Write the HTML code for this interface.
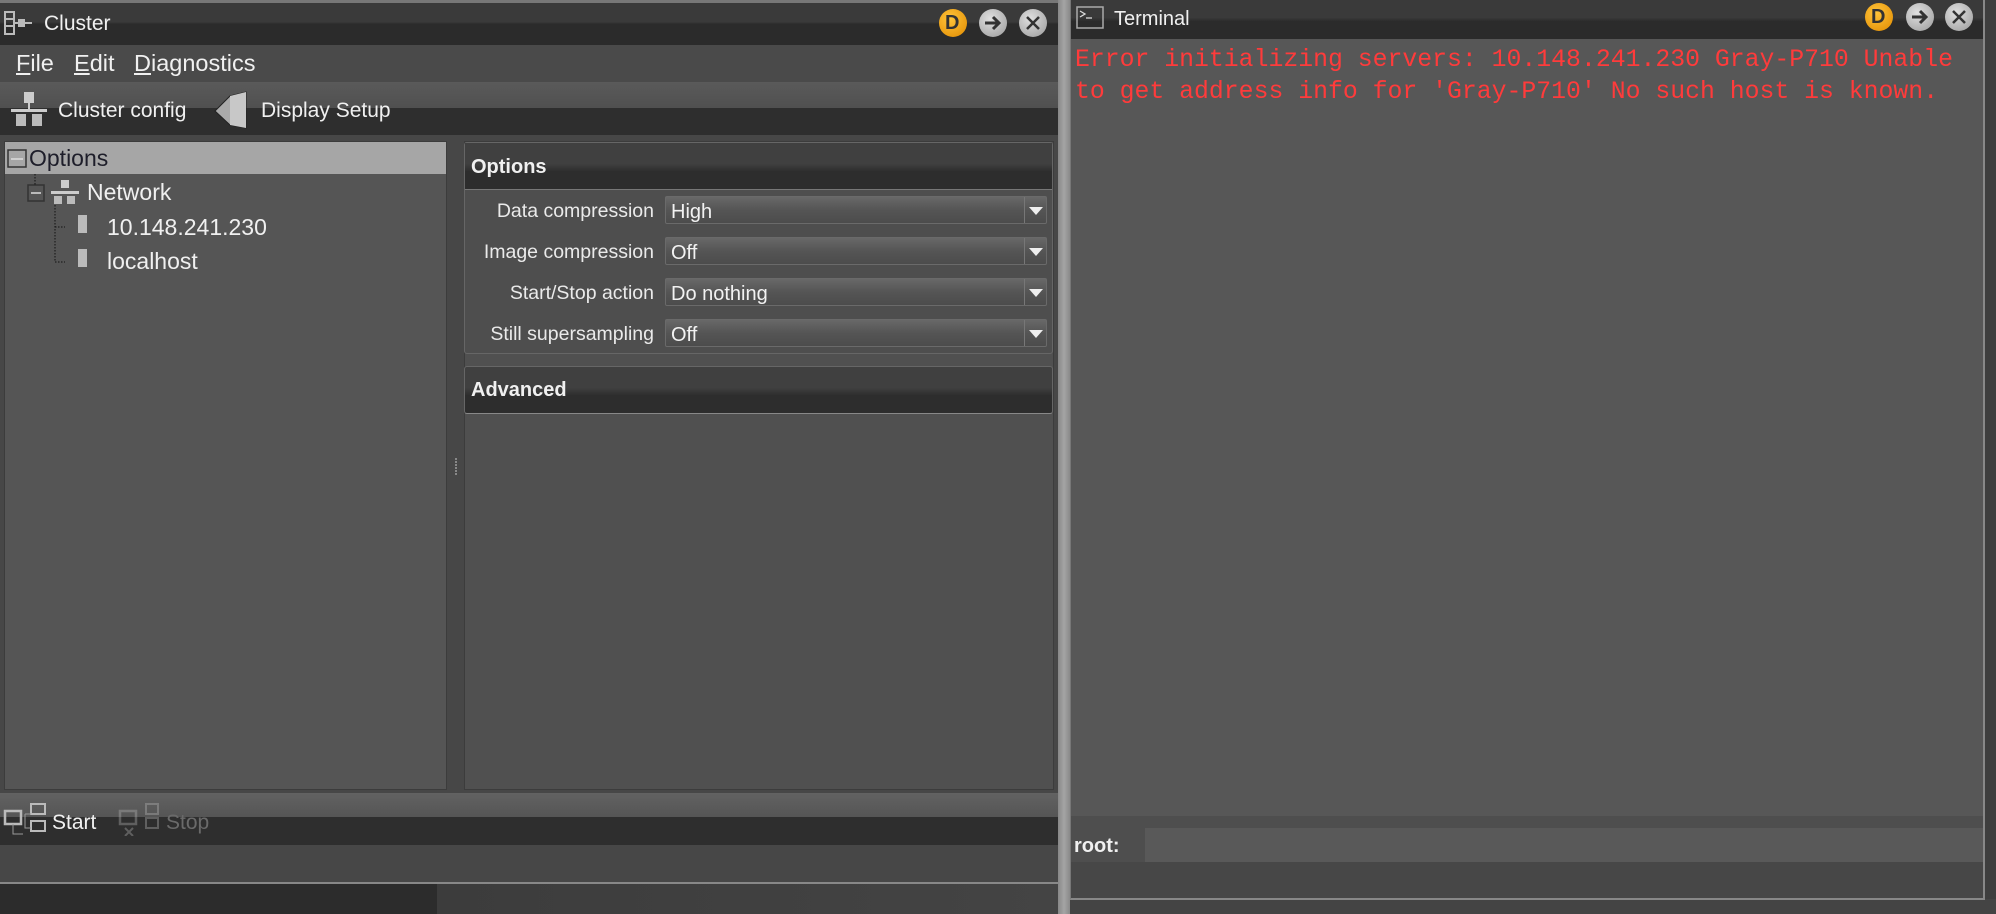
<!DOCTYPE html>
<html><head><meta charset="utf-8"><style>
*{margin:0;padding:0;box-sizing:border-box}
body{width:1996px;height:914px;background:#2c2c2c;position:relative;overflow:hidden;font-family:"Liberation Sans",sans-serif;color:#f0f0f0}
.a{position:absolute}
.t{position:absolute;white-space:nowrap;line-height:1}
.btn{position:absolute;width:28px;height:28px;border-radius:50%;background:radial-gradient(circle at 40% 35%,#e0e0e0,#9a9a9a);}
.combo{position:absolute;left:665px;width:382px;height:28px;border:1px solid #6a6a6a;border-radius:2px;background:linear-gradient(#686868,#555 50%,#4c4c4c);}
.combo span{position:absolute;left:5px;top:4px;font-size:20px;color:#f2f2f2}
.combo i{position:absolute;right:0;top:0;width:22px;height:26px;border-left:1px solid #777}
.combo i:after{content:"";position:absolute;left:4px;top:10px;border-left:7px solid transparent;border-right:7px solid transparent;border-top:8px solid #eee}
.lbl{position:absolute;right:1342px;font-size:19.5px;color:#eaeaea}
</style></head><body>
<div class="a" style="left:437px;top:883px;width:633px;height:31px;background:linear-gradient(90deg,#3c3c3c,#444)"></div>
<div class="a" style="left:1985px;top:0;width:11px;height:914px;background:#3e3e3e"></div>
<div class="a" style="left:1070px;top:899px;width:926px;height:15px;background:#444"></div>
<div class="a" style="left:0;top:0;width:1058px;height:884px;background:#474747;border-bottom:2px solid #888"></div>
<div class="a" style="left:0;top:0;width:1058px;height:3px;background:#777"></div>
<div class="a" style="left:0;top:3px;width:1058px;height:42px;background:linear-gradient(#3a3a3a 0,#3a3a3a 45%,#2b2b2b 50%,#2b2b2b)"></div>
<svg class="a" style="left:4px;top:11px" width="30" height="24"><rect x="1" y="1" width="9" height="22" fill="none" stroke="#bbb" stroke-width="2"/><line x1="1" y1="8" x2="10" y2="8" stroke="#bbb" stroke-width="2"/><line x1="1" y1="15" x2="10" y2="15" stroke="#bbb" stroke-width="2"/><rect x="14" y="8" width="7" height="8" fill="#bbb"/><line x1="10" y1="12" x2="28" y2="12" stroke="#bbb" stroke-width="2"/></svg>
<div class="t" style="left:44px;top:13px;font-size:21px">Cluster</div>
<div class="btn" style="left:939px;top:9px;background:radial-gradient(circle at 40% 35%,#ffc43a,#e08a00)"></div><div class="t" style="left:945px;top:13px;font-size:20px;color:#333;font-weight:bold">D</div>
<div class="btn" style="left:979px;top:9px"></div><svg class="a" style="left:979px;top:9px" width="28" height="28"><path d="M6 14h14M14 8l6 6-6 6" stroke="#333" stroke-width="3" fill="none"/></svg>
<div class="btn" style="left:1019px;top:9px"></div><svg class="a" style="left:1019px;top:9px" width="28" height="28"><path d="M8 8l12 12M20 8L8 20" stroke="#333" stroke-width="2.5"/></svg>
<div class="a" style="left:0;top:45px;width:1058px;height:37px;background:#4a4a4a"></div>
<div class="t" style="left:16px;top:52px;font-size:23.5px"><u>F</u>ile</div>
<div class="t" style="left:74px;top:52px;font-size:23.5px"><u>E</u>dit</div>
<div class="t" style="left:134px;top:52px;font-size:23.5px"><u>D</u>iagnostics</div>
<div class="a" style="left:0;top:82px;width:1058px;height:26px;background:linear-gradient(#5a5a5a,#505050)"></div>
<div class="a" style="left:0;top:108px;width:1058px;height:27px;background:#2e2e2e"></div>
<svg class="a" style="left:10px;top:91px" width="38" height="36"><rect x="14" y="1" width="10" height="11" fill="#ccc"/><rect x="18" y="12" width="2" height="6" fill="#ccc"/><rect x="1" y="18" width="36" height="3" fill="#ccc"/><rect x="6" y="23" width="10" height="12" fill="#bbb"/><rect x="22" y="23" width="10" height="12" fill="#bbb"/></svg>
<div class="t" style="left:58px;top:100px;font-size:21px">Cluster config</div>
<svg class="a" style="left:212px;top:91px" width="44" height="38"><polygon points="34,1 34,37 18,34 3,20 18,5" fill="#aaa" stroke="#222"/><polygon points="18,5 34,1 34,37 18,34" fill="#c8c8c8"/></svg>
<div class="t" style="left:261px;top:100px;font-size:21px">Display Setup</div>
<div class="a" style="left:4px;top:141px;width:443px;height:649px;background:#555;border:1px solid #3c3c3c"></div>
<div class="a" style="left:5px;top:142px;width:441px;height:32px;background:#a6a6a6"></div>
<svg class="a" style="left:5px;top:142px" width="150" height="130"><rect x="3" y="8" width="18" height="17" fill="none" stroke="#333" stroke-width="1.5"/><line x1="6" y1="17" x2="18" y2="17" stroke="#ddd" stroke-width="1.5"/><rect x="23" y="43" width="16" height="16" fill="none" stroke="#333" stroke-width="1.5"/><line x1="26" y1="51" x2="36" y2="51" stroke="#ddd" stroke-width="1.5"/><path d="M30 32v11M50 60v60h10M50 85h10" stroke="#111" stroke-dasharray="1.5 1.5" fill="none"/><rect x="56" y="38" width="8" height="8" fill="#ccc"/><rect x="46" y="49" width="28" height="3" fill="#ccc"/><rect x="49" y="54" width="8" height="8" fill="#bbb"/><rect x="62" y="54" width="8" height="8" fill="#bbb"/><rect x="73" y="73" width="9" height="18" fill="#bbb"/><rect x="73" y="107" width="9" height="18" fill="#bbb"/></svg>
<div class="t" style="left:29px;top:147px;font-size:23px;color:#1e1e2a">Options</div>
<div class="t" style="left:87px;top:181px;font-size:23px">Network</div>
<div class="t" style="left:107px;top:216px;font-size:23px">10.148.241.230</div>
<div class="t" style="left:107px;top:250px;font-size:23px">localhost</div>
<svg class="a" style="left:455px;top:458px" width="4" height="18"><g fill="#888"><rect y="0" width="2" height="2"/><rect y="3" width="2" height="2"/><rect y="6" width="2" height="2"/><rect y="9" width="2" height="2"/><rect y="12" width="2" height="2"/><rect y="15" width="2" height="2"/></g></svg>
<div class="a" style="left:464px;top:141px;width:590px;height:649px;background:#505050;border:1px solid #3c3c3c"></div>
<div class="a" style="left:464px;top:142px;width:589px;height:212px;border:1px solid #666;border-radius:3px;background:#4e4e4e"></div>
<div class="a" style="left:465px;top:143px;width:587px;height:47px;background:linear-gradient(#404040 0,#404040 45%,#2d2d2d 62%);border-bottom:1px solid #777"></div>
<div class="t" style="left:471px;top:157px;font-size:20px;font-weight:bold">Options</div>
<div class="lbl" style="top:200px">Data compression</div>
<div class="lbl" style="top:241px">Image compression</div>
<div class="lbl" style="top:282px">Start/Stop action</div>
<div class="lbl" style="top:323px">Still supersampling</div>
<div class="combo" style="top:196px"><span>High</span><i></i></div>
<div class="combo" style="top:237px"><span>Off</span><i></i></div>
<div class="combo" style="top:278px"><span>Do nothing</span><i></i></div>
<div class="combo" style="top:319px"><span>Off</span><i></i></div>
<div class="a" style="left:464px;top:366px;width:589px;height:48px;border:1px solid #666;border-radius:3px;background:linear-gradient(#404040 0,#404040 45%,#2d2d2d 62%);border-bottom:1px solid #888"></div>
<div class="t" style="left:471px;top:380px;font-size:20px;font-weight:bold">Advanced</div>
<div class="a" style="left:0;top:793px;width:1058px;height:24px;background:linear-gradient(#626262,#555)"></div>
<div class="a" style="left:0;top:817px;width:1058px;height:28px;background:#2e2e2e"></div>
<svg class="a" style="left:3px;top:802px" width="46" height="34"><rect x="2" y="9" width="16" height="13" fill="none" stroke="#bbb" stroke-width="2.5"/><rect x="28" y="2" width="14" height="10" fill="none" stroke="#bbb" stroke-width="2"/><rect x="28" y="19" width="14" height="10" fill="none" stroke="#bbb" stroke-width="2"/><path d="M10 22v10h10M22 12v14h6M22 12h6" stroke="#999" fill="none"/></svg>
<div class="t" style="left:52px;top:812px;font-size:21px">Start</div>
<svg class="a" style="left:118px;top:802px" width="46" height="34" opacity=".35"><rect x="2" y="9" width="16" height="13" fill="none" stroke="#bbb" stroke-width="2.5"/><rect x="28" y="2" width="12" height="10" fill="none" stroke="#bbb" stroke-width="2"/><rect x="28" y="16" width="12" height="10" fill="none" stroke="#bbb" stroke-width="2"/><path d="M7 26l8 8M15 26l-8 8" stroke="#bbb" stroke-width="2"/></svg>
<div class="t" style="left:166px;top:812px;font-size:21px;color:#6a6a6a">Stop</div>
<div class="a" style="left:1058px;top:0;width:12px;height:914px;background:linear-gradient(90deg,#888,#a4a4a4,#8a8a8a)"></div>
<div class="a" style="left:1070px;top:0;width:915px;height:900px;background:#474747;border-left:1px solid #777;border-right:2px solid #888;border-bottom:2px solid #888"></div>
<div class="a" style="left:1071px;top:0;width:912px;height:39px;background:linear-gradient(#3a3a3a 0,#3a3a3a 45%,#2b2b2b 55%)"></div>
<svg class="a" style="left:1076px;top:6px" width="28" height="24"><rect x="1" y="1" width="26" height="21" fill="none" stroke="#aaa" stroke-width="1.5"/><path d="M4 5l5 3-5 3M10 12h6" stroke="#ddd" stroke-width="1.3" fill="none"/></svg>
<div class="t" style="left:1114px;top:9px;font-size:20px">Terminal</div>
<div class="btn" style="left:1865px;top:3px;background:radial-gradient(circle at 40% 35%,#ffc43a,#e08a00)"></div><div class="t" style="left:1871px;top:7px;font-size:20px;color:#333;font-weight:bold">D</div>
<div class="btn" style="left:1906px;top:3px"></div><svg class="a" style="left:1906px;top:3px" width="28" height="28"><path d="M6 14h14M14 8l6 6-6 6" stroke="#333" stroke-width="3" fill="none"/></svg>
<div class="btn" style="left:1945px;top:3px"></div><svg class="a" style="left:1945px;top:3px" width="28" height="28"><path d="M8 8l12 12M20 8L8 20" stroke="#333" stroke-width="2.5"/></svg>
<div class="a" style="left:1071px;top:39px;width:912px;height:777px;background:#575757"></div>
<div class="a" style="left:1075px;top:44px;font-family:'Liberation Mono',monospace;font-size:24.8px;line-height:32px;color:#ff3b3b;white-space:pre">Error initializing servers: 10.148.241.230 Gray-P710 Unable
to get address info for 'Gray-P710' No such host is known.</div>
<div class="a" style="left:1071px;top:816px;width:912px;height:12px;background:#4e4e4e"></div>
<div class="a" style="left:1071px;top:828px;width:74px;height:34px;background:#4e4e4e"></div>
<div class="a" style="left:1145px;top:828px;width:838px;height:34px;background:#595959"></div>
<div class="t" style="left:1074px;top:836px;font-size:20px;font-weight:bold">root:</div>
</body></html>
